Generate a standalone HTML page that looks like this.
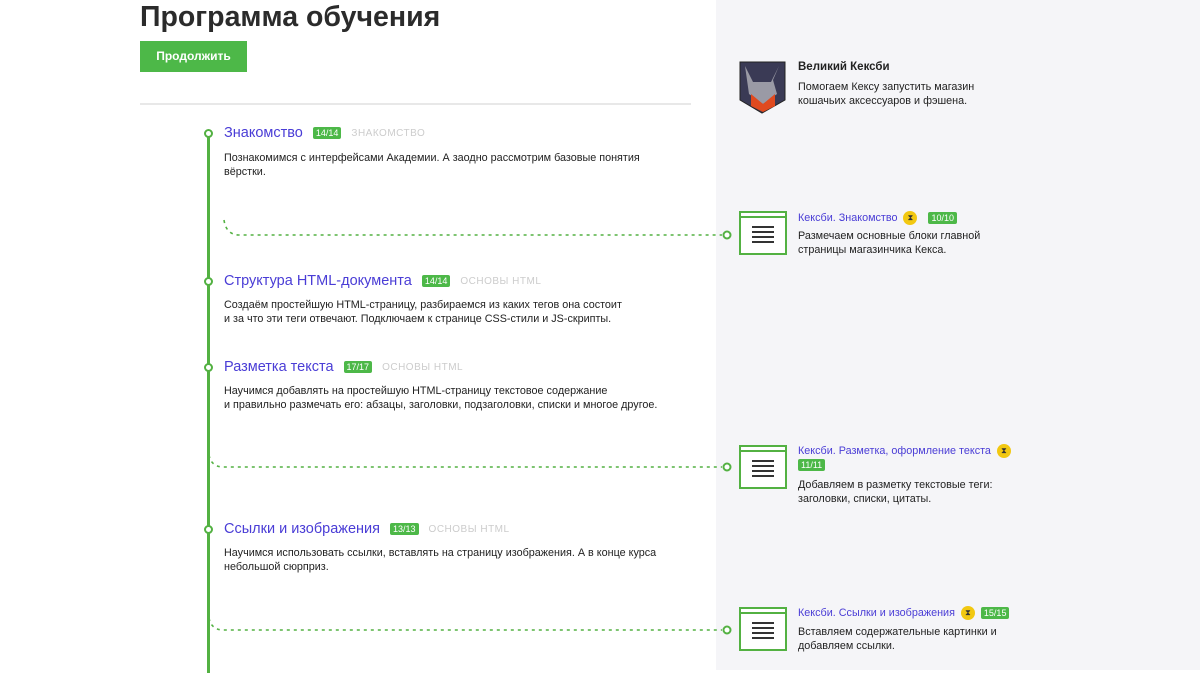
<!DOCTYPE html>
<html><head><meta charset="utf-8"><style>
*{margin:0;padding:0;box-sizing:border-box}
body{width:1200px;height:670px;overflow:hidden;background:#fff;font-family:"Liberation Sans","DejaVu Sans",sans-serif;color:#222;position:relative}
.a{position:absolute}
.right{left:716px;top:0;width:484px;height:670px;background:#f5f5f8}
h1{position:absolute;left:140px;top:1px;font-size:28.5px;font-weight:bold;color:#2b2b2b;letter-spacing:0}
.btn{left:140px;top:41px;width:107px;height:31px;background:#4db848;color:#fff;font-size:12px;font-weight:bold;text-align:center;line-height:31px}
.hr{left:140px;top:103px;width:551px;height:2px;background:#e8e8e8}
.vl{left:207px;top:133px;width:3px;height:540px;background:#53b142}
.dot{width:9px;height:9px;border:2px solid #53b142;border-radius:50%;background:#fff}
.h{font-size:14.5px;color:#4a3dd6;white-space:nowrap;display:flex;align-items:center}
.b{display:inline-block;background:#4db848;color:#fff;font-size:9px;padding:0 3px;height:12px;line-height:12px;border-radius:2px;margin-left:10px}
.t{color:#ccc;font-size:10px;margin-left:10px;letter-spacing:.5px}
.d{font-size:10.8px;line-height:14px;color:#222;white-space:nowrap}
.ic{width:48px;height:44px;border:2px solid #53b142;background:#fff}
.ic:before{content:"";position:absolute;left:0;right:0;top:3px;height:2px;background:#53b142}
.ic i{position:absolute;left:11px;height:2px;background:#333;width:22px}
.ct{font-size:10.8px;color:#4a3dd6;white-space:nowrap;display:flex;align-items:center}
.hg{display:inline-block;width:14px;height:14px;border-radius:50%;background:#f2c811;margin-left:6px;font-size:8px;text-align:center;line-height:14px;color:#333}
</style></head><body>
<div class="a right"></div>
<h1>Программа обучения</h1>
<div class="a btn">Продолжить</div>
<div class="a hr"></div>
<div class="a vl"></div>
<svg class="a" style="left:0;top:0" width="1200" height="670">
<g fill="none" stroke="#53b142" stroke-width="1.6" stroke-dasharray="3 4">
<path d="M224 220 Q226 234 238 235 L722 235"/>
<path d="M209 455 Q211 466 222 467 L722 467"/>
<path d="M209 618 Q211 629 222 630 L722 630"/>
</g>
<g fill="#fff" stroke="#53b142" stroke-width="2">
<circle cx="727" cy="235" r="3.5"/><circle cx="727" cy="467" r="3.5"/><circle cx="727" cy="630" r="3.5"/>
</g></svg>
<div class="a dot" style="left:204px;top:129px"></div>
<div class="a dot" style="left:204px;top:277px"></div>
<div class="a dot" style="left:204px;top:363px"></div>
<div class="a dot" style="left:204px;top:525px"></div>

<div class="a h" style="left:224px;top:125px">Знакомство<span class="b">14/14</span><span class="t">ЗНАКОМСТВО</span></div>
<div class="a d" style="left:224px;top:151px">Познакомимся с интерфейсами Академии. А заодно рассмотрим базовые понятия<br>вёрстки.</div>
<div class="a h" style="left:224px;top:273px">Структура HTML-документа<span class="b">14/14</span><span class="t">ОСНОВЫ HTML</span></div>
<div class="a d" style="left:224px;top:298px">Создаём простейшую HTML-страницу, разбираемся из каких тегов она состоит<br>и за что эти теги отвечают. Подключаем к странице CSS-стили и JS-скрипты.</div>
<div class="a h" style="left:224px;top:359px">Разметка текста<span class="b">17/17</span><span class="t">ОСНОВЫ HTML</span></div>
<div class="a d" style="left:224px;top:384px">Научимся добавлять на простейшую HTML-страницу текстовое содержание<br>и правильно размечать его: абзацы, заголовки, подзаголовки, списки и многое другое.</div>
<div class="a h" style="left:224px;top:521px">Ссылки и изображения<span class="b">13/13</span><span class="t">ОСНОВЫ HTML</span></div>
<div class="a d" style="left:224px;top:546px">Научимся использовать ссылки, вставлять на страницу изображения. А в конце курса<br>небольшой сюрприз.</div>

<svg class="a" style="left:739px;top:60px" width="47" height="54"><path d="M1 2 H46 V40 L23 53 L1 40Z" fill="#3a3a55" stroke="#222"/><path d="M6 6 L14 22 L32 22 L40 6 L34 20 L38 34 L24 44 L10 34Z" fill="#9a9aa5"/><path d="M12 34 L24 44 L36 34 L36 46 L24 52 L12 46Z" fill="#e04a1f"/></svg>
<div class="a" style="left:798px;top:61px;font-size:11.5px;font-weight:bold;color:#222">Великий Кексби</div>
<div class="a d" style="left:798px;top:80px">Помогаем Кексу запустить магазин<br>кошачьих аксессуаров и фэшена.</div>

<div class="a ic" style="left:739px;top:211px"><i style="top:13px"></i><i style="top:18px"></i><i style="top:23px"></i><i style="top:28px"></i></div>
<div class="a ct" style="left:798px;top:211px">Кексби. Знакомство<span class="hg">⧗</span><span class="b" style="margin-left:11px">10/10</span></div>
<div class="a d" style="left:798px;top:229px">Размечаем основные блоки главной<br>страницы магазинчика Кекса.</div>

<div class="a ic" style="left:739px;top:445px"><i style="top:13px"></i><i style="top:18px"></i><i style="top:23px"></i><i style="top:28px"></i></div>
<div class="a ct" style="left:798px;top:444px">Кексби. Разметка, оформление текста<span class="hg">⧗</span></div>
<div class="a b" style="left:798px;top:459px;margin:0">11/11</div>
<div class="a d" style="left:798px;top:478px">Добавляем в разметку текстовые теги:<br>заголовки, списки, цитаты.</div>

<div class="a ic" style="left:739px;top:607px"><i style="top:13px"></i><i style="top:18px"></i><i style="top:23px"></i><i style="top:28px"></i></div>
<div class="a ct" style="left:798px;top:606px">Кексби. Ссылки и изображения<span class="hg">⧗</span><span class="b" style="margin-left:6px">15/15</span></div>
<div class="a d" style="left:798px;top:625px">Вставляем содержательные картинки и<br>добавляем ссылки.</div>
</body></html>
